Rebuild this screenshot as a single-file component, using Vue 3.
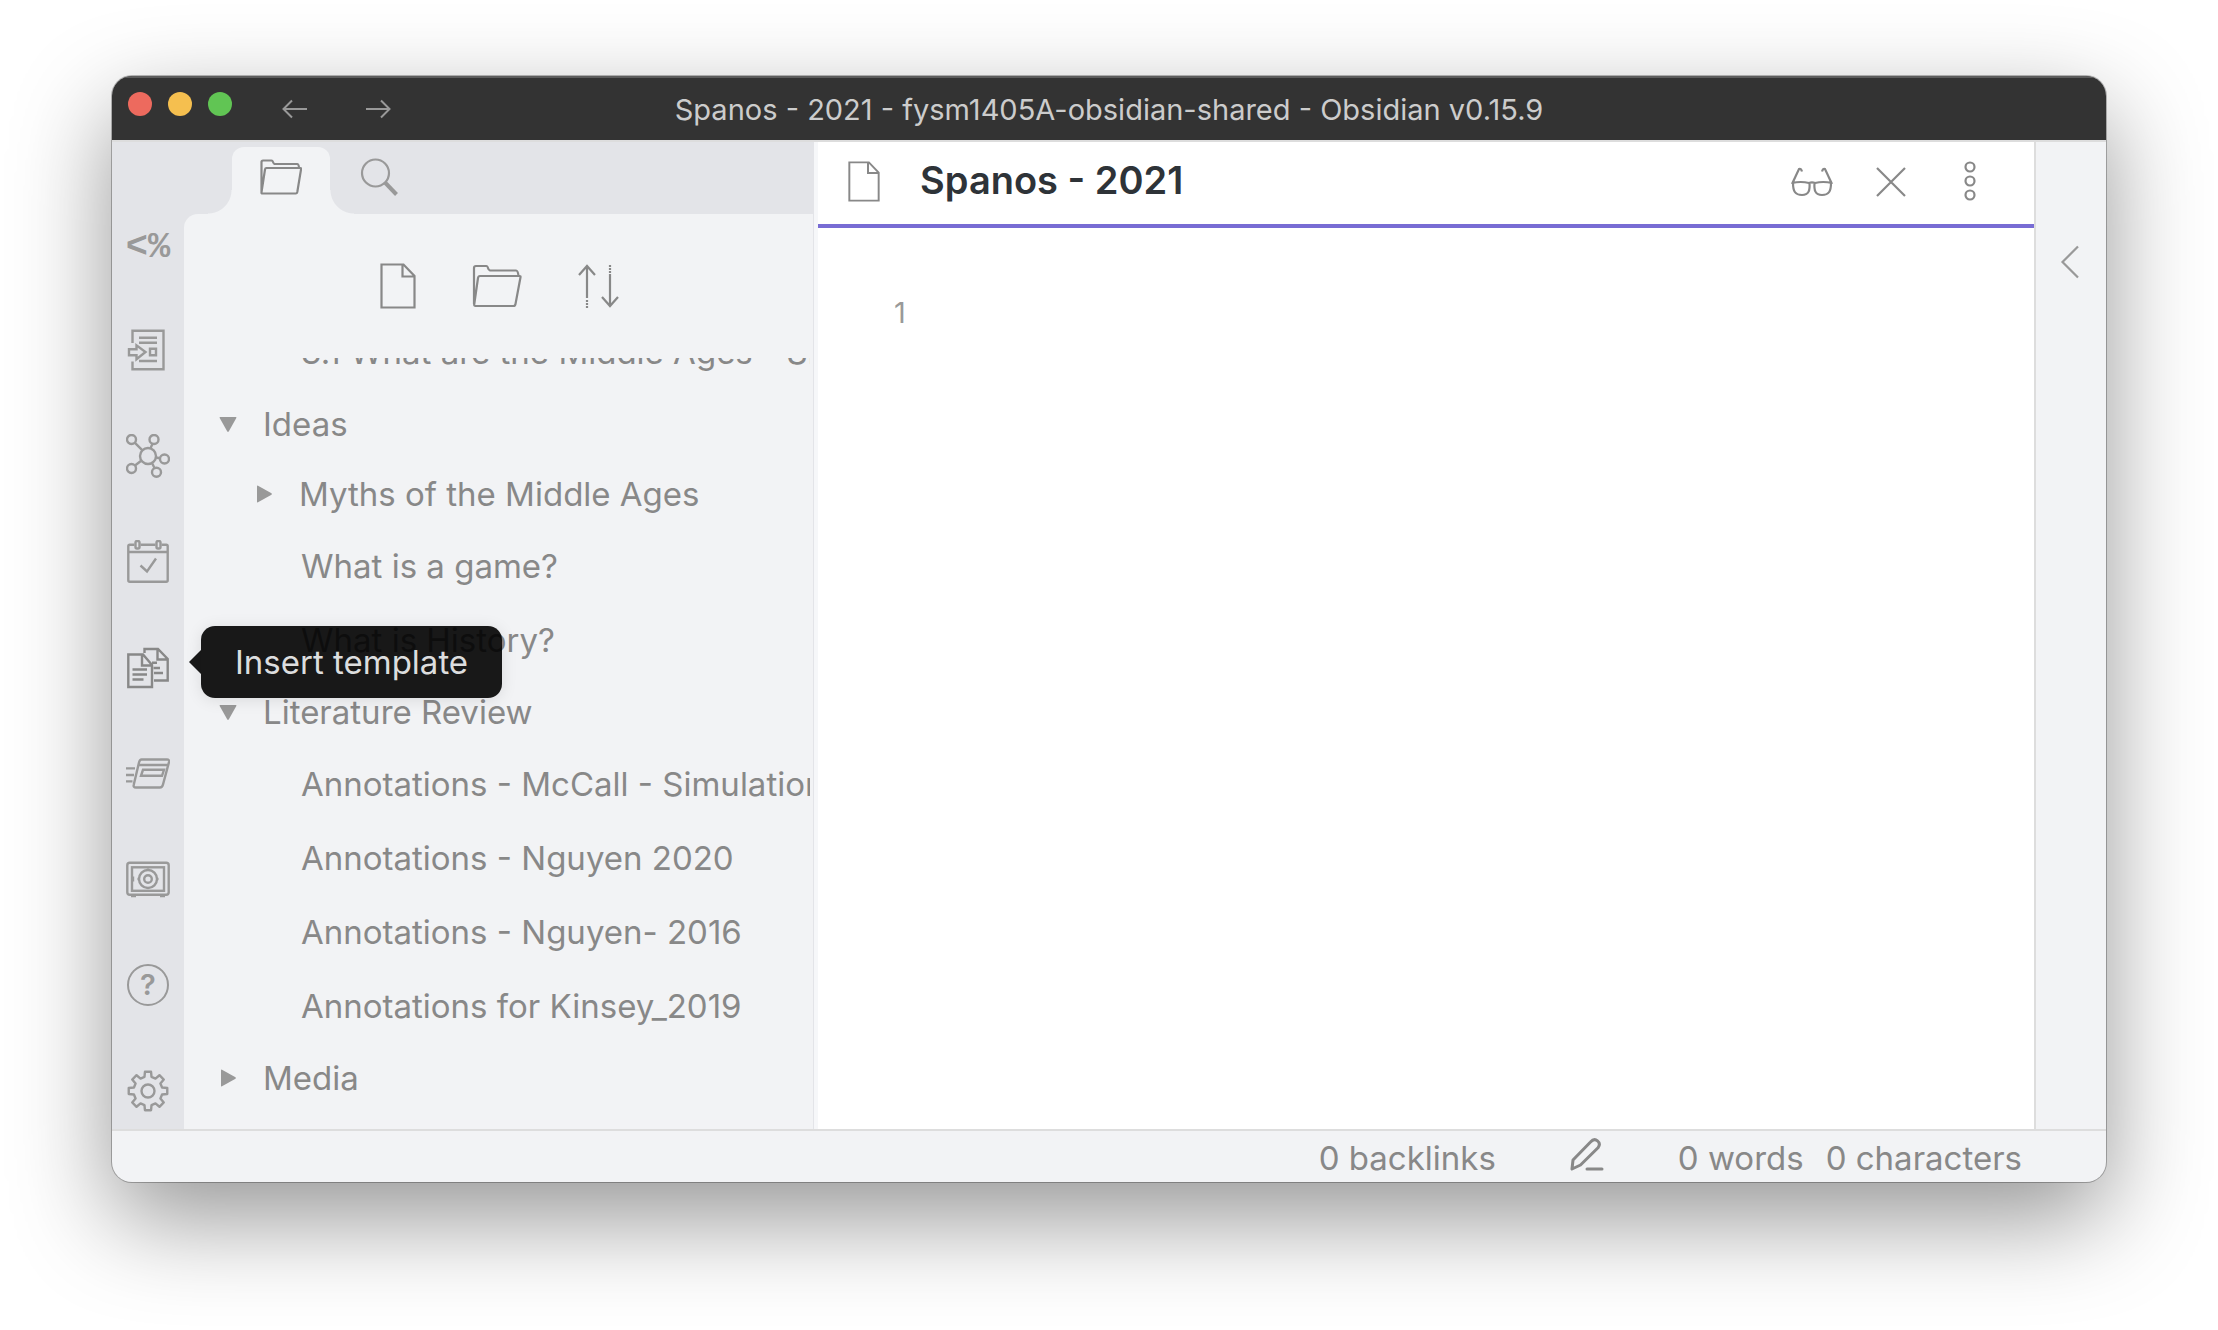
<script setup>
import { ref } from 'vue'

const tree = ref([
  { kind: 'file', depth: 2, label: '3.1 What are the Middle Ages - Simulations' },
  { kind: 'folder', depth: 1, open: true, label: 'Ideas' },
  { kind: 'folder', depth: 2, open: false, label: 'Myths of the Middle Ages' },
  { kind: 'file', depth: 2, label: 'What is a game?' },
  { kind: 'file', depth: 2, label: 'What is History?' },
  { kind: 'folder', depth: 1, open: true, label: 'Literature Review' },
  { kind: 'file', depth: 2, label: 'Annotations - McCall - Simulation Games' },
  { kind: 'file', depth: 2, label: 'Annotations - Nguyen 2020' },
  { kind: 'file', depth: 2, label: 'Annotations - Nguyen- 2016' },
  { kind: 'file', depth: 2, label: 'Annotations for Kinsey_2019' },
  { kind: 'folder', depth: 1, open: false, label: 'Media' }
])

// Outline of an eight-toothed gear centred in a 44 x 44 box
function gearPath() {
  const pts = []
  const at = (deg, r) => {
    const a = (deg * Math.PI) / 180
    pts.push(`${(22 + r * Math.cos(a)).toFixed(2)} ${(22 + r * Math.sin(a)).toFixed(2)}`)
  }
  for (let i = 0; i < 8; i++) {
    const c = i * 45 - 90
    at(c - 14, 14.5)
    at(c - 9, 19.5)
    at(c + 9, 19.5)
    at(c + 14, 14.5)
  }
  return `M${pts.join('L')}Z`
}
const gear = gearPath()
</script>

<template>
  <div class="desktop">
    <div class="window">
      <header class="titlebar">
        <div class="controls">
          <div class="lights">
            <button class="light red" aria-label="Close window"></button>
            <button class="light yellow" aria-label="Minimise window"></button>
            <button class="light green" aria-label="Zoom window"></button>
          </div>
          <div class="history">
            <button class="nav" aria-label="Back">
              <svg width="26" height="20" viewBox="0 0 26 20"><path d="M10 1.500 1.500 10l8.500 8.500M1.500 10H25" /></svg>
            </button>
            <button class="nav" aria-label="Forward">
              <svg width="26" height="20" viewBox="0 0 26 20"><path d="M16 1.500 24.500 10 16 18.500M24.500 10H1" /></svg>
            </button>
          </div>
        </div>
        <div class="window-title">Spanos - 2021 - fysm1405A-obsidian-shared - Obsidian v0.15.9</div>
        <div></div>
      </header>

      <div class="workspace">
        <nav class="ribbon">
          <button class="action templater" aria-label="Templater">&lt;%</button>
          <button class="action" aria-label="Import">
            <svg width="44" height="44" viewBox="0 0 44 44">
              <path d="M6.500 15V2.800h31v38.500h-31V33.500" />
              <path d="M3 21.300h7.500v-4L19.500 24l-9 7.300v-4H3z" />
              <path d="M13 9.800h18M13 14.800h18M13 33h18M24 20.800h6v6.400h-6z" />
            </svg>
          </button>
          <button class="action" aria-label="Open graph view">
            <svg width="44" height="44" viewBox="0 0 44 44">
              <circle cx="22" cy="22" r="8" />
              <circle cx="5.500" cy="5.500" r="4.500" /><circle cx="28" cy="5.500" r="4.500" />
              <circle cx="38.500" cy="25" r="4.500" /><circle cx="30.500" cy="38.300" r="4.500" />
              <circle cx="5.500" cy="34.500" r="4.500" />
              <path d="m8.700 8.700 7.500 7.500M26.500 9.700l-2 4.500M30 23.500l4 .7M26 29l2.500 5M9 31.500l6.500-5" />
            </svg>
          </button>
          <button class="action" aria-label="Open today's daily note">
            <svg width="44" height="44" viewBox="0 0 44 44">
              <path d="M8.500 4.800H3.800q-1.500 0-1.500 1.500v34q0 1.500 1.500 1.500h36.400q1.500 0 1.500-1.500v-34q0-1.500-1.500-1.500h-4.700M14.500 4.800h15M2.300 12h39.400" />
              <rect x="9.500" y="1" width="4" height="7.500" rx="1.500" />
              <rect x="30.500" y="1" width="4" height="7.500" rx="1.500" />
              <path d="m14.500 25.500 6.500 6 9-13" />
            </svg>
          </button>
          <div class="tip-anchor">
            <button class="action active" aria-label="Insert template" aria-describedby="ribbon-tip">
              <svg width="44" height="44" viewBox="0 0 44 44">
                <path d="M2.300 8.500H17l9 10.500v22H2.300zM16 8.500V19.500h10" />
                <path d="M6.500 23.500H21M6.500 28.500H21M6.500 33.500h11" />
                <path d="M18.500 7V3H32l9.700 10v21.500H28M31.500 3v10.500h10M26 16.800h5M27.500 22H34M28 27h9" />
              </svg>
            </button>
            <div id="ribbon-tip" class="tooltip" role="tooltip">Insert template</div>
          </div>
          <button class="action" aria-label="Review flashcards">
            <svg width="44" height="44" viewBox="0 0 44 44">
              <path d="M15.500 8.500H41q2.500 0 2 2.500l-6 22.500q-.8 3-3 3H10q-3 0-2.200-3l5.200-22q.8-3 2.500-3zM12.500 14h30" />
              <path d="M17 18.800h21l-2 6H15z" />
              <path d="M0 17.400h9M0 24h8M0 30.400h6.500" />
            </svg>
          </button>
          <button class="action" aria-label="Open another vault">
            <svg width="44" height="44" viewBox="0 0 44 44">
              <rect x="1.300" y="5.800" width="41.400" height="32" rx="2.500" />
              <rect x="6" y="10.300" width="32" height="23.500" />
              <circle cx="22" cy="22" r="9" /><circle cx="22" cy="22" r="3.800" />
              <path d="M5 39h5M34 39h5M7 19.500v5M11.500 22H14M30 22h2.500M22 11.500V14M22 30v2" />
            </svg>
          </button>
          <button class="action help" aria-label="Help"><span>?</span></button>
          <button class="action" aria-label="Settings">
            <svg width="44" height="44" viewBox="0 0 44 44">
              <path :d="gear" stroke-linejoin="round" />
              <circle cx="22" cy="22" r="6.500" />
            </svg>
          </button>
        </nav>

        <aside class="sidebar">
          <div class="tabs">
            <button class="tab current" aria-label="File explorer">
              <svg width="42" height="36" viewBox="0 0 42 36">
                <path d="M1.500 34V3q0-1.500 1.500-1.500h8.500q1 0 1.500 1.500t1.500 2H37q2 0 2 4.500M6.500 9h33.800q1 0 .8 1L37.300 33q-.3 1.500-1.500 1.500H2.500q-1.200 0-1-1.200L5 10.500Q5.200 9 6.500 9z" />
              </svg>
            </button>
            <button class="tab" aria-label="Search">
              <svg width="38" height="38" viewBox="0 0 38 38">
                <circle cx="15.500" cy="15" r="13.500" />
                <path d="m25 24.500 11.500 12" stroke-width="4" />
              </svg>
            </button>
          </div>
          <div class="panel">
            <div class="toolbar">
              <button aria-label="New note">
                <svg width="36" height="46" viewBox="0 0 36 46"><path d="M1.500 1.500h22L34.500 13v31.500h-33zM22.500 1.500v12h12" /></svg>
              </button>
              <button aria-label="New folder">
                <svg width="50" height="44" viewBox="0 0 50 44">
                  <path d="M2 40V4q0-2 2-2h10.500q1 0 1.500 2t2 2.500H44q2 0 2.500 5.500M8 12h39.500q1.200 0 1 1.200L43.500 40q-.4 2-2 2H3.500q-1.500 0-1.300-1.500L6 14q.3-2 2-2z" />
                </svg>
              </button>
              <button aria-label="Change sort order">
                <svg width="42" height="44" viewBox="0 0 42 44">
                  <path d="M1 11 9 2l8 9M9 2v32M24 33l8 9 8-9M32 42V10" />
                  <path d="M9 36v8M32 1v8" stroke-dasharray="2 1" />
                </svg>
              </button>
            </div>
            <div class="tree">
              <a
                v-for="item in tree"
                :key="item.label"
                href="#"
                class="row"
                :class="[item.kind, 'depth-' + item.depth]"
              >
                <svg v-if="item.kind === 'folder'" class="caret" :class="{ open: item.open }" width="18" height="18" viewBox="0 0 18 18">
                  <path d="M2 1.200v15.600q0 1 1 .5l13.500-7.600q.8-.7 0-1.400L3 .7q-1-.5-1 .5z" />
                </svg>
                <span class="label">{{ item.label }}</span>
              </a>
            </div>
          </div>
        </aside>

        <main class="editor">
          <div class="note-header">
            <svg width="32" height="41" viewBox="0 0 36 46"><path d="M1.500 1.500h22L34.500 13v31.500h-33zM22.500 1.500v12h12" /></svg>
            <h1>Spanos - 2021</h1>
            <div class="note-actions">
              <button aria-label="Preview">
                <svg width="42" height="30" viewBox="0 0 42 30">
                  <path d="M1 17 8 2q2-1 3 2.500M41 17 34 2q-2-1-3 2.500M1 16q9-2 17 0 3-1.200 6 0 8-2 17 0M2 16c0 8 2 12 9 12s8-5 7.500-12M40 16c0 8-2 12-9 12s-8-5-7.500-12" />
                </svg>
              </button>
              <button aria-label="Close">
                <svg width="32" height="32" viewBox="0 0 32 32"><path d="m2 2 28 28M30 2 2 30" /></svg>
              </button>
              <button aria-label="More options">
                <svg width="14" height="40" viewBox="0 0 14 40">
                  <circle cx="7" cy="6" r="4.500" /><circle cx="7" cy="20" r="4.500" /><circle cx="7" cy="34" r="4.500" />
                </svg>
              </button>
            </div>
          </div>
          <div class="note-body"><span class="line-number">1</span></div>
        </main>

        <div class="right-ribbon">
          <button aria-label="Expand right sidebar">
            <svg width="20" height="34" viewBox="0 0 20 34"><path d="M18 1.500 2.500 17 18 32.500" /></svg>
          </button>
        </div>
      </div>

      <footer class="status">
        <span>0 backlinks</span>
        <svg width="34" height="34" viewBox="0 0 34 34">
          <path d="m2 31 1-9L20.500 4q3.500-4 7-1.200t.5 7L10.500 27zM17 31h15" />
        </svg>
        <span class="words">0 words</span>
        <span>0 characters</span>
      </footer>
    </div>
  </div>
</template>

<style>
body {
  background: #fff;
}
</style>

<style scoped>
.desktop {
  box-sizing: border-box;
  height: 100vh;
  padding: 76px 112px 148px;
  font-family: Inter, "Liberation Sans", sans-serif;
  color: #888;
  display: flex;
}
.window {
  flex: 1;
  min-width: 0;
  display: flex;
  flex-direction: column;
  border-radius: 20px;
  overflow: hidden;
  background: #f2f3f5;
  box-shadow: 0 0 0 1px rgba(0, 0, 0, 0.26), 0 36px 98px rgba(0, 0, 0, 0.42);
}
button {
  margin: 0;
  padding: 0;
  border: 0;
  background: none;
  color: inherit;
  font: inherit;
  display: flex;
  align-items: center;
  justify-content: center;
}
svg {
  display: block;
  flex: none;
  fill: none;
  stroke: currentColor;
  stroke-width: 2.2;
}

.titlebar {
  flex: none;
  height: 64px;
  box-sizing: border-box;
  border-top: 2px solid #5c5c5c;
  background: #333;
  display: grid;
  grid-template-columns: 1fr auto 1fr;
  align-items: center;
}
.controls {
  display: flex;
  align-items: center;
  gap: 50px;
  padding-left: 16px;
}
.lights {
  display: flex;
  gap: 16px;
  padding-bottom: 10px;
}
.light {
  width: 24px;
  height: 24px;
  border-radius: 50%;
}
.red { background: #ed6a5e; }
.yellow { background: #f5bf4f; }
.green { background: #61c554; }
.history {
  display: flex;
  gap: 57px;
  color: #999;
}
.nav svg {
  stroke-width: 2;
}
.window-title {
  padding-top: 2px;
  font-size: 29px;
  line-height: 34px;
  color: #ccc;
  white-space: nowrap;
}

.workspace {
  flex: 1;
  min-height: 0;
  display: flex;
  background: #e3e4e8;
  border-top: 2px solid #ddd;
}
.ribbon {
  flex: none;
  width: 72px;
  box-sizing: border-box;
  padding: 80px 0 16px;
  display: flex;
  flex-direction: column;
  align-items: center;
  justify-content: space-between;
  color: #999;
}
.action {
  width: 44px;
  height: 44px;
}
.action svg {
  stroke-width: 2.4;
}
.action.active {
  color: #888;
}
.templater {
  padding-top: 6px;
  font: bold 37px/44px "Liberation Mono", monospace;
}
.help span {
  width: 42px;
  height: 42px;
  box-sizing: border-box;
  border: 2px solid currentColor;
  border-radius: 50%;
  font-size: 29px;
  font-weight: 600;
  line-height: 38px;
}
.tip-anchor {
  position: relative;
}
.tooltip {
  position: absolute;
  z-index: 2;
  left: 75px;
  top: -20px;
  padding: 16px 34px;
  border-radius: 14px;
  background: rgba(0, 0, 0, 0.9);
  color: #dcddde;
  font-size: 33px;
  line-height: 40px;
  white-space: nowrap;
  box-shadow: 0 2px 16px rgba(0, 0, 0, 0.1);
}
.tooltip::before {
  content: "";
  position: absolute;
  left: -12px;
  top: 24px;
  border: solid transparent;
  border-width: 12px 12px 12px 0;
  border-right-color: rgba(0, 0, 0, 0.9);
}

.sidebar {
  flex: none;
  width: 31.6%;
  display: flex;
  flex-direction: column;
  min-width: 0;
}
.tabs {
  flex: none;
  display: flex;
  height: 72px;
  padding-left: 48px;
  color: #999;
}
.tab {
  width: 98px;
  margin-top: 5px;
  padding-bottom: 8px;
}
.tab.current {
  position: relative;
  color: #888;
  background: #f2f3f5;
  border-radius: 12px 12px 0 0;
}
.tab.current::before,
.tab.current::after {
  content: "";
  position: absolute;
  bottom: 0;
  width: 24px;
  height: 24px;
}
.tab.current::before {
  right: 100%;
  background: radial-gradient(circle at 0 0, transparent 23px, #f2f3f5 24px);
}
.tab.current::after {
  left: 100%;
  background: radial-gradient(circle at 100% 0, transparent 23px, #f2f3f5 24px);
}
.panel {
  flex: 1;
  min-height: 0;
  display: flex;
  flex-direction: column;
  background: #f2f3f5;
  border-right: 1px solid #e3e4e8;
  border-top-left-radius: 14px;
}
.toolbar {
  flex: none;
  height: 144px;
  padding-left: 2px;
  display: flex;
  align-items: center;
  justify-content: center;
  gap: 56px;
}
.tree {
  flex: 1;
  min-height: 0;
  margin-right: 3px;
  padding-bottom: 16px;
  overflow: hidden;
  display: flex;
  flex-direction: column;
  justify-content: flex-end;
}
.row {
  flex: none;
  display: flex;
  align-items: center;
  color: #888;
  font-size: 33px;
  line-height: 42px;
  text-decoration: none;
  white-space: nowrap;
}
.folder { height: 70px; }
.file { height: 74px; }
.folder.depth-1 { padding-left: 35px; }
.folder.depth-2 { padding-left: 71px; }
.file.depth-2 { padding-left: 117px; }
.caret {
  margin-right: 26px;
  color: #999;
  fill: currentColor;
  stroke: none;
}
.caret.open {
  transform: rotate(90deg);
}

.editor {
  flex: 1;
  min-width: 0;
  display: flex;
  flex-direction: column;
  background: #fff;
  border-left: 4px solid #f6f7f9;
}
.note-header {
  flex: none;
  box-sizing: border-box;
  height: 86px;
  padding: 0 57px 2px 30px;
  display: flex;
  align-items: center;
  border-bottom: 4px solid #786cd4;
}
.note-header > svg {
  margin-bottom: 2px;
}
h1 {
  margin: 0 0 4px 40px;
  font-size: 38px;
  line-height: 44px;
  font-weight: 600;
  color: #2e3338;
  white-space: nowrap;
}
.note-actions {
  margin-left: auto;
  display: flex;
  align-items: center;
  gap: 42px;
}
.note-actions button:last-child {
  margin: 0 0 2px 14px;
}
.note-body {
  flex: 1;
  padding: 68px 76px;
}
.line-number {
  font-size: 29px;
  line-height: 34px;
  color: #999;
}
.right-ribbon {
  flex: none;
  width: 68px;
  padding: 103px 2px 0 0;
  background: #f2f3f5;
  border-left: 2px solid #ddd;
  color: #999;
  display: flex;
  align-items: flex-start;
  justify-content: center;
}
.status {
  flex: none;
  height: 49px;
  padding: 2px 84px 0 0;
  border-top: 2px solid #ddd;
  display: flex;
  align-items: center;
  justify-content: flex-end;
  font-size: 33px;
  line-height: 40px;
  white-space: nowrap;
}
.status svg {
  margin: 0 74px 6px;
  stroke-width: 3;
  stroke-linejoin: round;
  stroke-linecap: round;
}
.words {
  margin-right: 22px;
}
</style>
